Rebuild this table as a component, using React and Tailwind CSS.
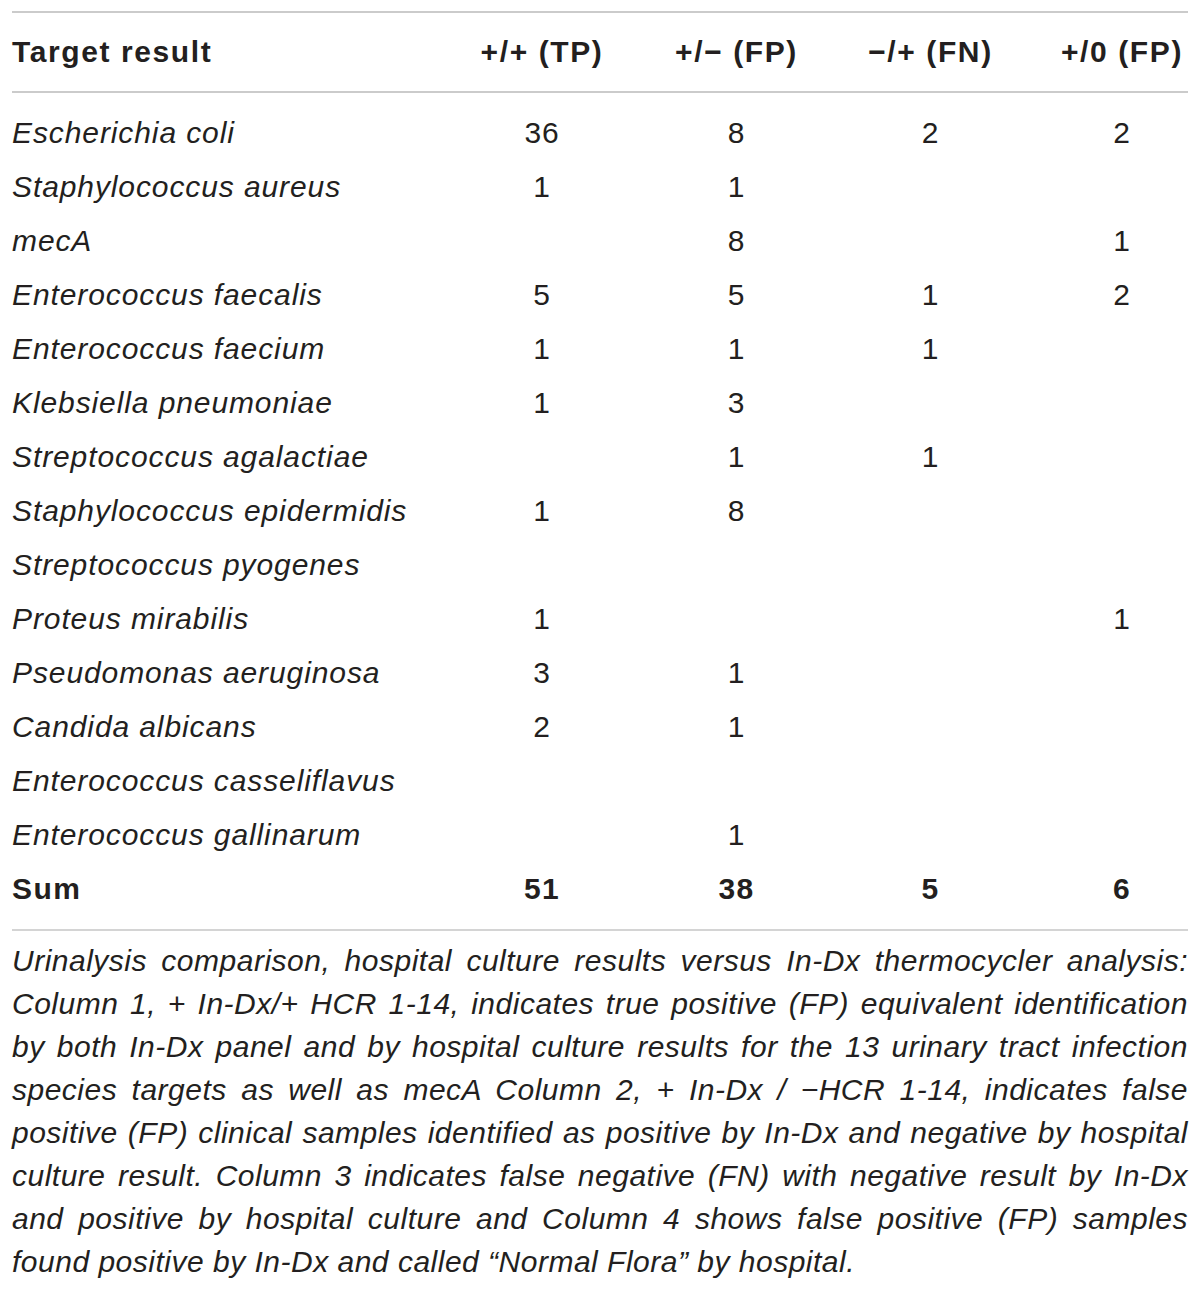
const rows = [
  ['Escherichia coli', '36', '8', '2', '2'],
  ['Staphylococcus aureus', '1', '1', '', ''],
  ['mecA', '', '8', '', '1'],
  ['Enterococcus faecalis', '5', '5', '1', '2'],
  ['Enterococcus faecium', '1', '1', '1', ''],
  ['Klebsiella pneumoniae', '1', '3', '', ''],
  ['Streptococcus agalactiae', '', '1', '1', ''],
  ['Staphylococcus epidermidis', '1', '8', '', ''],
  ['Streptococcus pyogenes', '', '', '', ''],
  ['Proteus mirabilis', '1', '', '', '1'],
  ['Pseudomonas aeruginosa', '3', '1', '', ''],
  ['Candida albicans', '2', '1', '', ''],
  ['Enterococcus casseliflavus', '', '', '', ''],
  ['Enterococcus gallinarum', '', '1', '', ''],
];

const caption = [
  'Urinalysis comparison, hospital culture results versus In-Dx thermocycler analysis:',
  'Column 1, + In-Dx/+ HCR 1-14, indicates true positive (FP) equivalent identification',
  'by both In-Dx panel and by hospital culture results for the 13 urinary tract infection',
  'species targets as well as mecA Column 2, + In-Dx / \u2212HCR 1-14, indicates false',
  'positive (FP) clinical samples identified as positive by In-Dx and negative by hospital',
  'culture result. Column 3 indicates false negative (FN) with negative result by In-Dx',
  'and positive by hospital culture and Column 4 shows false positive (FP) samples',
];

const grid = 'grid grid-cols-[433px_194px_195px_193px_161px] items-center';

const Row = ({ cells, bold }) => (
  <div className={`${grid} h-[54px] ${bold ? 'font-bold tracking-[1.4px]' : 'tracking-[0.9px]'}`}>
    <div className={bold ? '' : 'italic'}>{cells[0]}</div>
    <div className="text-center">{cells[1]}</div>
    <div className="text-center">{cells[2]}</div>
    <div className="text-center">{cells[3]}</div>
    <div className="text-center pl-[29px]">{cells[4]}</div>
  </div>
);

export default function App() {
  return (
    <div
      className="w-[1200px] bg-white px-[12px] pt-[11px] text-[#231f20]"
      style={{ fontFamily: '"Liberation Sans", Arial, sans-serif' }}
    >
      <div className="border-t-2 border-[#cbcbcb]">
        {/* Header */}
        <div className={`${grid} h-[80px] border-b-2 border-[#cbcbcb] text-[30px] font-bold tracking-[1.6px] leading-none`}>
          <div>Target result</div>
          <div className="text-center">+/+ (TP)</div>
          <div className="text-center">+/&minus; (FP)</div>
          <div className="text-center">&minus;/+ (FN)</div>
          <div className="text-center pl-[29px]">+/0 (FP)</div>
        </div>

        {/* Body */}
        <div className="pt-[13px] pb-[13px] border-b-2 border-[#d4d4d4] text-[30px] leading-none">
          {rows.map((r) => (
            <Row key={r[0]} cells={r} />
          ))}
          <Row cells={['Sum', '51', '38', '5', '6']} bold />
        </div>
      </div>

      {/* Caption */}
      <div className="mt-[8px] pb-[8px] italic text-[30px] leading-[43px] tracking-[0.5px]">
        {caption.map((line) => (
          <div key={line} className="text-justify [text-align-last:justify]">
            {line}
          </div>
        ))}
        <div>found positive by In-Dx and called &ldquo;Normal Flora&rdquo; by hospital.</div>
      </div>
    </div>
  );
}
